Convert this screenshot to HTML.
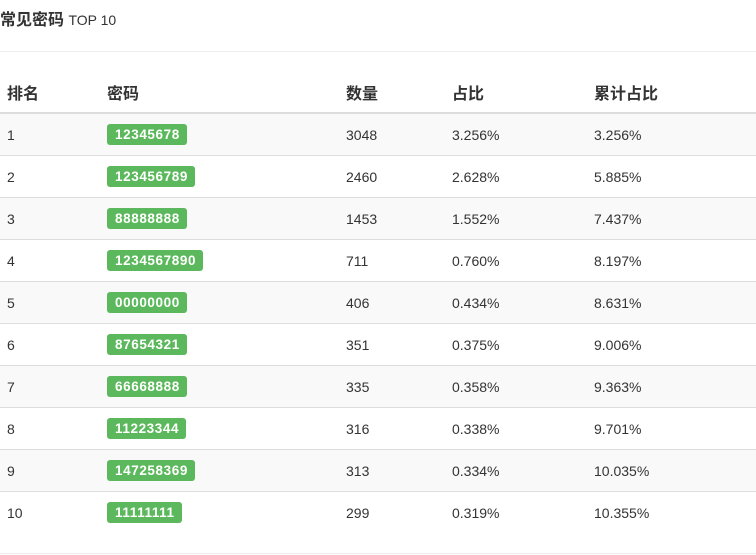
<!DOCTYPE html>
<html><head><meta charset="utf-8"><style>
body{margin:0;background:#fff;font-family:"Liberation Sans","Noto Sans CJK SC",sans-serif;color:#333;width:756px;height:555px;overflow:hidden;position:relative}
.t{position:absolute;left:0;top:9px;font-size:16px;font-weight:bold;line-height:22px}
.t small{font-weight:normal;font-size:14px}
.hr{position:absolute;left:0;width:756px;height:1px;background:#eee}
table{position:absolute;left:0;top:72px;width:756px;border-collapse:collapse;font-size:14px}
th{text-align:left;font-size:16px;height:40px;border-bottom:2px solid #ddd;padding:0 0 0 7px}
td{height:41px;border-bottom:1px solid #ddd;padding:0 0 0 7px}
tr:nth-child(odd) td{background:#f9f9f9}
.l{display:inline-block;background:#5cb85c;color:#fff;font-weight:bold;font-size:13.5px;letter-spacing:0.6px;padding:0 7px 0 8px;height:21px;line-height:21px;border-radius:3px}
</style></head><body>
<div class="t">常见密码 <small>TOP 10</small></div>
<div class="hr" style="top:51px"></div>
<table>
<thead><tr><th style="width:93px">排名</th><th style="width:232px">密码</th><th style="width:99px">数量</th><th style="width:135px">占比</th><th>累计占比</th></tr></thead>
<tbody>
<tr><td>1</td><td><span class="l">12345678</span></td><td>3048</td><td>3.256%</td><td>3.256%</td></tr>
<tr><td>2</td><td><span class="l">123456789</span></td><td>2460</td><td>2.628%</td><td>5.885%</td></tr>
<tr><td>3</td><td><span class="l">88888888</span></td><td>1453</td><td>1.552%</td><td>7.437%</td></tr>
<tr><td>4</td><td><span class="l">1234567890</span></td><td>711</td><td>0.760%</td><td>8.197%</td></tr>
<tr><td>5</td><td><span class="l">00000000</span></td><td>406</td><td>0.434%</td><td>8.631%</td></tr>
<tr><td>6</td><td><span class="l">87654321</span></td><td>351</td><td>0.375%</td><td>9.006%</td></tr>
<tr><td>7</td><td><span class="l">66668888</span></td><td>335</td><td>0.358%</td><td>9.363%</td></tr>
<tr><td>8</td><td><span class="l">11223344</span></td><td>316</td><td>0.338%</td><td>9.701%</td></tr>
<tr><td>9</td><td><span class="l">147258369</span></td><td>313</td><td>0.334%</td><td>10.035%</td></tr>
<tr><td style="border-bottom:none">10</td><td style="border-bottom:none"><span class="l">11111111</span></td><td style="border-bottom:none">299</td><td style="border-bottom:none">0.319%</td><td style="border-bottom:none">10.355%</td></tr>
</tbody></table>
<div class="hr" style="top:553px"></div>
</body></html>
